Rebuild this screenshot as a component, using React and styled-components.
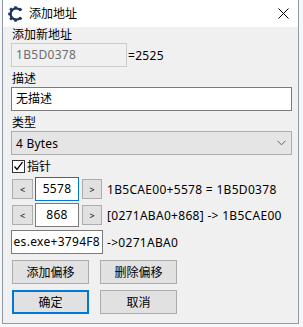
import React from 'react';
import styled, { createGlobalStyle } from 'styled-components';

const Global = createGlobalStyle`
  html, body { margin: 0; padding: 0; background: #f6f7f9; }
  body {
    font-family: "Noto Sans", "Noto Sans CJK SC", sans-serif;
    font-size: 12px;
    color: #000;
  }
`;

const Window = styled.div`
  margin-left: 2px;
  width: 297px;
  height: 324px;
  box-sizing: border-box;
  border: 1px solid #8f9aa6;
  border-top: none;
  background: #f0f0f0;
  display: flex;
  flex-direction: column;
`;

const TitleBar = styled.div`
  height: 27px;
  flex: none;
  background: #fff;
  display: flex;
  align-items: center;
  padding-left: 5px;
  padding-right: 9px;
`;

const Title = styled.div`
  margin-left: 5px;
  line-height: 16px;
  flex: 1;
`;

const Content = styled.div`
  padding-left: 8px;
  display: flex;
  flex-direction: column;
`;

const Label = styled.div`
  height: 16px;
  line-height: 16px;
  padding-left: 1px;
  margin-top: ${p => p.$mt || 0}px;
  white-space: nowrap;
`;

const Row = styled.div`
  display: flex;
  align-items: center;
  height: 24px;
  margin-top: ${p => p.$mt || 0}px;
  white-space: nowrap;
`;

const TextBox = styled.div`
  box-sizing: border-box;
  height: 24px;
  width: ${p => p.$w}px;
  border: 1px solid ${p => (p.$focus ? '#0078d7' : p.$disabled ? '#cccccc' : '#7a7a7a')};
  background: ${p => (p.$disabled ? '#f0f0f0' : '#fff')};
  color: ${p => (p.$disabled ? '#6d6d6d' : '#000')};
  padding: 0 ${p => (p.$pad ?? 4)}px;
  line-height: 22px;
  letter-spacing: ${p => (p.$ls ? '0.3px' : '0')};
  display: flex;
  justify-content: ${p => p.$justify || 'flex-start'};
  overflow: hidden;
  white-space: nowrap;
  margin-left: ${p => p.$ml || 0}px;
`;

const Select = styled.div`
  box-sizing: border-box;
  height: 24px;
  width: 281px;
  border: 1px solid #adadad;
  background: #e5e5e5;
  display: flex;
  align-items: center;
  justify-content: space-between;
  padding: 0 5px 0 4px;
  letter-spacing: 0.2px;
`;

const Suffix = styled.span`
  margin-left: ${p => p.$ml || 1}px;
  letter-spacing: 0.3px;
`;

const CheckRow = styled.div`
  display: flex;
  align-items: center;
  height: 16px;
  margin-top: 3px;
  padding-left: 1px;
`;

const Box = styled.div`
  box-sizing: border-box;
  width: 13px;
  height: 13px;
  border: 1px solid #333;
  background: #fff;
  display: flex;
  align-items: center;
  justify-content: center;
  margin-right: 2px;
`;

const SpinButton = styled.div`
  box-sizing: border-box;
  width: ${p => p.$w || 21}px;
  height: 20px;
  border: 1px solid #adadad;
  background: #e1e1e1;
  font-size: 9px;
  display: flex;
  align-items: center;
  justify-content: center;
  margin-left: ${p => p.$ml || 0}px;
`;

const ButtonRow = styled.div`
  display: flex;
  gap: 11px;
  margin-top: 6px;
  padding-left: 1px;
`;

const Button = styled.div`
  box-sizing: border-box;
  width: 77px;
  height: 24px;
  border: ${p => (p.$default ? '2px solid #0078d7' : '1px solid #adadad')};
  background: #e1e1e1;
  display: flex;
  align-items: center;
  justify-content: center;
`;

const Icon = () => (
  <svg width="16" height="16" viewBox="0 0 16 16">
    <path d="M12.6 4.6 A5.6 5.6 0 1 0 12.6 11.4" fill="none" stroke="#1c355f" strokeWidth="2.4" />
    <g fill="#1c355f">
      <rect x="6.2" y="0.3" width="2.6" height="3" />
      <rect x="6.2" y="12.7" width="2.6" height="3" />
      <rect x="0.2" y="6.7" width="3" height="2.6" />
      <rect x="1.9" y="1.9" width="2.6" height="3" transform="rotate(-45 3.2 3.4)" />
      <rect x="1.9" y="11.1" width="2.6" height="3" transform="rotate(45 3.2 12.6)" />
      <rect x="11.2" y="2.2" width="2.6" height="2.6" transform="rotate(45 12.5 3.5)" />
      <rect x="11.2" y="11.2" width="2.6" height="2.6" transform="rotate(45 12.5 12.5)" />
    </g>
  </svg>
);

const CloseIcon = () => (
  <svg width="11" height="11" viewBox="0 0 11 11">
    <path d="M0.5 0.5 L10.5 10.5 M10.5 0.5 L0.5 10.5" stroke="#000" strokeWidth="1" />
  </svg>
);

const Chevron = () => (
  <svg width="9" height="6" viewBox="0 0 9 6">
    <path d="M0.5 0.8 L4.5 4.8 L8.5 0.8" fill="none" stroke="#606060" strokeWidth="1" />
  </svg>
);

const Check = () => (
  <svg width="11" height="11" viewBox="0 0 11 11">
    <path d="M1.5 5.5 L4 8.4 L9.5 1.2" fill="none" stroke="#000" strokeWidth="1.3" />
  </svg>
);

export default function App() {
  return (
    <>
      <Global />
      <Window>
        <TitleBar>
          <Icon />
          <Title>添加地址</Title>
          <CloseIcon />
        </TitleBar>
        <Content>
          <Label>添加新地址</Label>
          <Row>
            <TextBox $w={116} $disabled $ls>1B5D0378</TextBox>
            <Suffix>=2525</Suffix>
          </Row>
          <Label $mt={4}>描述</Label>
          <TextBox $w={281}>无描述</TextBox>
          <Label $mt={4}>类型</Label>
          <Select>
            <span>4 Bytes</span>
            <Chevron />
          </Select>
          <CheckRow>
            <Box><Check /></Box>
            <span>指针</span>
          </CheckRow>
          <Row $mt={3}>
            <SpinButton $ml={1}>&lt;</SpinButton>
            <TextBox $w={44} $ml={2} $focus $ls $justify="center">5578</TextBox>
            <SpinButton $w={20} $ml={3}>&gt;</SpinButton>
            <Suffix $ml={5}>1B5CAE00+5578 = 1B5D0378</Suffix>
          </Row>
          <Row $mt={2}>
            <SpinButton $ml={1}>&lt;</SpinButton>
            <TextBox $w={44} $ml={2} $ls $justify="center">868</TextBox>
            <SpinButton $w={20} $ml={3}>&gt;</SpinButton>
            <Suffix $ml={5}>[0271ABA0+868] -&gt; 1B5CAE00</Suffix>
          </Row>
          <Row $mt={3}>
            <TextBox $w={92} $pad={2} $ls $justify="flex-end">es.exe+3794F8</TextBox>
            <Suffix $ml={4}>-&gt;0271ABA0</Suffix>
          </Row>
          <ButtonRow>
            <Button>添加偏移</Button>
            <Button>删除偏移</Button>
          </ButtonRow>
          <ButtonRow>
            <Button $default>确定</Button>
            <Button>取消</Button>
          </ButtonRow>
        </Content>
      </Window>
    </>
  );
}
